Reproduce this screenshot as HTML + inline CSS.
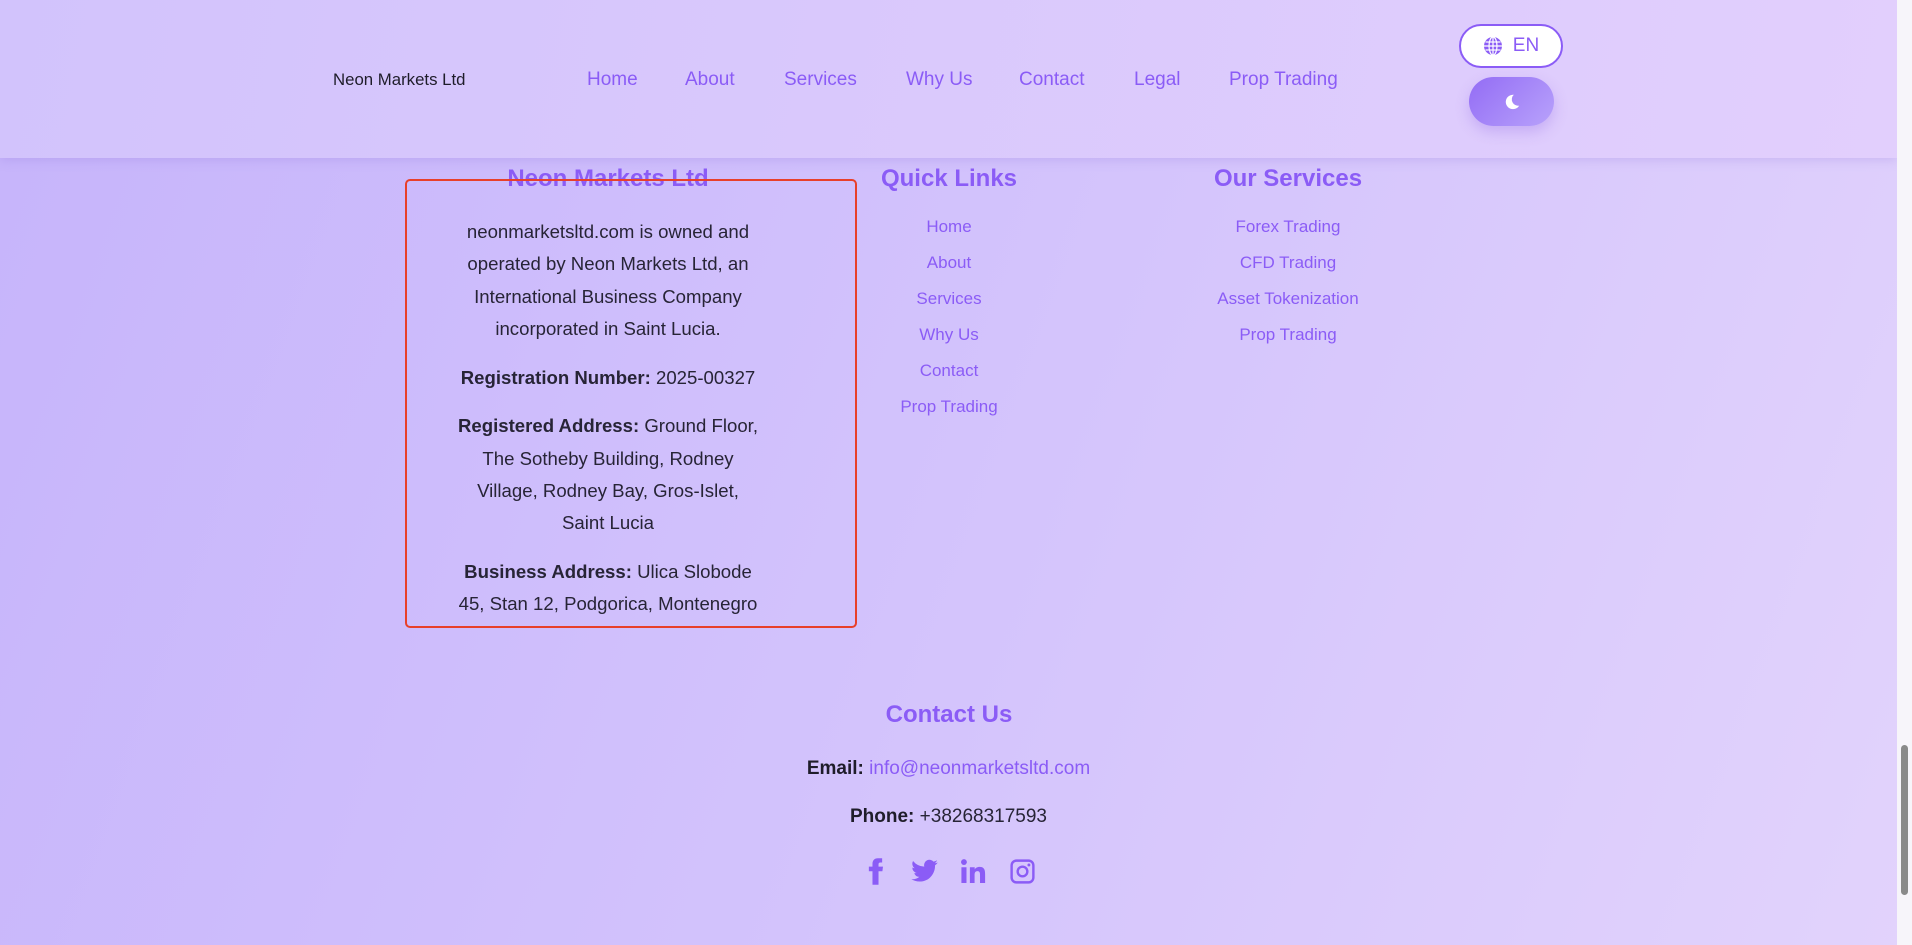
<!DOCTYPE html>
<html><head><meta charset="utf-8"><style>
*{margin:0;padding:0;box-sizing:border-box}
html,body{width:1912px;height:945px;overflow:hidden}
body{font-family:"Liberation Sans",sans-serif;background:linear-gradient(110deg,#c6b4fb 0%,#d3c3fc 50%,#e2d3fc 100%);position:relative;color:#272436}
.hdr{position:absolute;left:0;top:0;width:1897px;height:158px;background:linear-gradient(100deg,#d2c3fc,#e2cffd);box-shadow:0 2px 10px rgba(140,110,220,.25);z-index:2}
.sb{position:absolute;right:0;top:0;width:15px;height:945px;background:#f7f5fa;z-index:3}
.sb .th{position:absolute;left:4px;top:745px;width:7px;height:150px;background:#8a8a8a;border-radius:4px}
.brand{position:absolute;left:333px;top:70px;font-size:16.8px;color:#1f1d2a}
.nav a{position:absolute;top:69px;font-size:19px;color:#8b5cf6;text-decoration:none}
.en{position:absolute;left:1459px;top:24px;width:104px;height:44px;border:2px solid #8b5cf6;border-radius:22px;background:#fff;color:#8b5cf6;font-size:19px;display:flex;align-items:center;justify-content:center;gap:10px}
.moon{position:absolute;left:1469px;top:77px;width:85px;height:49px;border-radius:25px;background:linear-gradient(135deg,#936cf5,#b8a2fb);box-shadow:0 6px 14px rgba(140,100,230,.3);display:flex;align-items:center;justify-content:center}
h3{position:absolute;font-size:24px;color:#8b5cf6;font-weight:bold;transform:translateX(-50%);white-space:nowrap;top:165px}
.box{position:absolute;left:405px;top:179px;width:452px;height:449px;border:2px solid #e8402a;border-radius:5px}
.c1{position:absolute;left:408px;width:400px;top:216px;text-align:center;font-size:18.6px;line-height:32.3px;white-space:nowrap}
.c1 p{margin-bottom:16.5px}
.links{position:absolute;transform:translateX(-50%);text-align:center;font-size:17px;color:#8b5cf6;white-space:nowrap}
.links div{height:36px;line-height:36px}
.ct{position:absolute;left:0;width:1897px;text-align:center;font-size:19px}
.ct b{color:#1f1d2a}
.soc{position:absolute;top:857px;left:0;width:1897px;display:flex;justify-content:center;gap:20px}
.soc svg{width:29px;height:29px;fill:#8b5cf6}
</style></head><body>
<div class="hdr">
<div class="brand">Neon Markets Ltd</div>
<div class="nav">
<a style="left:587px">Home</a><a style="left:685px">About</a><a style="left:784px">Services</a><a style="left:906px">Why Us</a><a style="left:1019px">Contact</a><a style="left:1134px">Legal</a><a style="left:1229px">Prop Trading</a>
</div>
<div class="en"><svg width="20" height="20" viewBox="0 0 20 20"><circle cx="10" cy="10" r="9" fill="#8b5cf6"/><g stroke="#fff" stroke-width="1.2" fill="none"><ellipse cx="10" cy="10" rx="4" ry="9"/><line x1="1" y1="10" x2="19" y2="10"/><line x1="2.5" y1="6" x2="17.5" y2="6"/><line x1="2.5" y1="14" x2="17.5" y2="14"/><line x1="10" y1="1" x2="10" y2="19"/></g></svg>EN</div>
<div class="moon"><svg width="18" height="18" viewBox="0 0 20 20"><path d="M12 2a8 8 0 1 0 6 12A7 7 0 0 1 12 2z" fill="#fff"/></svg></div>
</div>
<div class="sb"><div class="th"></div></div>
<h3 style="left:608px">Neon Markets Ltd</h3>
<h3 style="left:949px">Quick Links</h3>
<h3 style="left:1288px">Our Services</h3>
<div class="box"></div>
<div class="c1">
<p>neonmarketsltd.com is owned and<br>operated by Neon Markets Ltd, an<br>International Business Company<br>incorporated in Saint Lucia.</p>
<p><b>Registration Number:</b> 2025-00327</p>
<p><b>Registered Address:</b> Ground Floor,<br>The Sotheby Building, Rodney<br>Village, Rodney Bay, Gros-Islet,<br>Saint Lucia</p>
<p><b>Business Address:</b> Ulica Slobode<br>45, Stan 12, Podgorica, Montenegro</p>
</div>
<div class="links" style="left:949px;top:209px"><div>Home</div><div>About</div><div>Services</div><div>Why Us</div><div>Contact</div><div>Prop Trading</div></div>
<div class="links" style="left:1288px;top:209px"><div>Forex Trading</div><div>CFD Trading</div><div>Asset Tokenization</div><div>Prop Trading</div></div>
<h3 style="left:949px;top:701px">Contact Us</h3>
<div class="ct" style="top:758px"><b>Email:</b> <span style="color:#8b5cf6">info@neonmarketsltd.com</span></div>
<div class="ct" style="top:806px"><b>Phone:</b> +38268317593</div>
<div class="soc">
<svg viewBox="0 0 24 24"><path d="M14.5 8V6c0-1 .5-1.5 1.5-1.5H17.5V1h-3.5c-3 0-4.5 2-4.5 4.5V8H6.5v3.8h3V23h5V11.8h3.2l.5-3.8z"/></svg>
<svg viewBox="0 0 24 24"><path d="M23 4.5a9 9 0 0 1-2.6.7 4.6 4.6 0 0 0 2-2.5 9 9 0 0 1-2.9 1.1A4.5 4.5 0 0 0 11.8 8 12.8 12.8 0 0 1 2.5 3.3a4.5 4.5 0 0 0 1.4 6 4.5 4.5 0 0 1-2-.6 4.5 4.5 0 0 0 3.6 4.5 4.5 4.5 0 0 1-2 .1 4.5 4.5 0 0 0 4.2 3.1A9 9 0 0 1 1 18.3 12.8 12.8 0 0 0 7.9 20.3c8.3 0 12.8-6.9 12.8-12.8v-.6A9 9 0 0 0 23 4.5z"/></svg>
<svg viewBox="0 0 24 24"><rect x="2" y="8.5" width="4.2" height="13"/><circle cx="4.1" cy="4.2" r="2.4"/><path d="M9 8.5h4v1.8c.6-1.1 2-2.1 4-2.1 4 0 4.6 2.6 4.6 6V21.5h-4.2v-6.4c0-1.5 0-3.4-2.1-3.4s-2.4 1.6-2.4 3.3v6.5H9z"/></svg>
<svg viewBox="0 0 24 24"><path d="M7 2h10a5 5 0 0 1 5 5v10a5 5 0 0 1-5 5H7a5 5 0 0 1-5-5V7a5 5 0 0 1 5-5zm0 2a3 3 0 0 0-3 3v10a3 3 0 0 0 3 3h10a3 3 0 0 0 3-3V7a3 3 0 0 0-3-3zm5 3a5 5 0 1 1 0 10 5 5 0 0 1 0-10zm0 2a3 3 0 1 0 0 6 3 3 0 0 0 0-6zm5.3-3.6a1.2 1.2 0 1 1 0 2.4 1.2 1.2 0 0 1 0-2.4z"/></svg>
</div>
</body></html>
